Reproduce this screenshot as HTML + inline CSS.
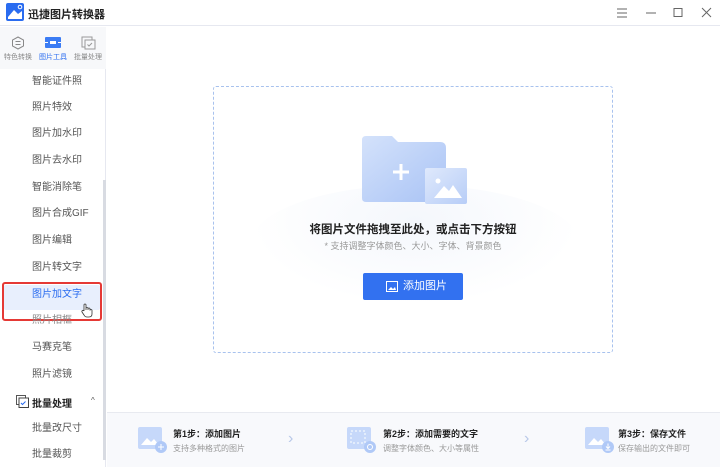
<!DOCTYPE html>
<html><head><meta charset="utf-8"><style>
*{margin:0;padding:0;box-sizing:border-box}
body{width:720px;height:467px;overflow:hidden;background:#fff;font-family:"Liberation Sans","Noto Sans CJK SC",sans-serif;position:relative;color:#333}
.abs{position:absolute}
.title{left:0;top:0;width:720px;height:26px;border-bottom:1px solid #e6e8f0;background:#fff}
.side{left:0;top:27px;width:106px;height:440px;border-right:1px solid #e6e8f0;background:#fff}
.tabs{left:0;top:27px;width:106px;height:42px;background:#f7f8fa}
.tab{position:absolute;top:36px;font-size:7px;color:#888;width:34px;text-align:center}
.item{position:absolute;left:32px;font-size:10px;color:#555;line-height:12px}
.btxt{font-size:9px;font-weight:bold;color:#222}
.bsub{font-size:8px;color:#999}
</style></head><body>
<div class="abs title"></div>
<svg class="abs" style="left:6px;top:3px" width="18" height="18" viewBox="0 0 18 18"><rect width="18" height="18" rx="2" fill="#2a6cf0"/><path d="M2 14 L8 7 L12 11 L16 8 L16 16 L2 16Z" fill="#fff"/><circle cx="14" cy="4" r="1.8" fill="none" stroke="#fff" stroke-width="1"/></svg>
<div class="abs" style="left:28px;top:6px;font-size:11px;font-weight:bold;color:#222">迅捷图片转换器</div>
<svg class="abs" style="left:615px;top:7px" width="100" height="12" viewBox="0 0 100 12"><g stroke="#666" stroke-width="1" fill="none"><path d="M2 2h10M2 6h10M2 10h10"/><path d="M31 6h10"/><rect x="59" y="1.5" width="8" height="8"/><path d="M87 1l9 9M96 1l-9 9"/></g></svg>
<div class="abs side"></div>
<div class="abs tabs"></div>
<svg class="abs" style="left:11px;top:36px" width="14" height="14" viewBox="0 0 14 14"><path d="M7 1 L12.5 4 V10 L7 13 L1.5 10 V4Z" fill="none" stroke="#888" stroke-width="1"/><path d="M4.5 5.5h5M4.5 8.5h5" stroke="#888" stroke-width="0.9"/></svg>
<svg class="abs" style="left:45px;top:37px" width="16" height="11" viewBox="0 0 16 11"><rect width="16" height="11" rx="1" fill="#3b7cf4"/><rect x="5" y="4" width="6" height="3" fill="#fff"/><path d="M0 5.5h3M13 5.5h3" stroke="#fff"/></svg>
<svg class="abs" style="left:81px;top:36px" width="15" height="14" viewBox="0 0 15 14"><rect x="1" y="1" width="10" height="10" fill="none" stroke="#999"/><rect x="4" y="4" width="10" height="9" fill="#f7f8fa" stroke="#999"/><path d="M6.5 8.5l1.5 1.5 3-3" stroke="#999" fill="none"/></svg>
<div class="tab" style="left:1px;top:52px">特色转换</div>
<div class="tab" style="left:36px;top:52px;color:#2a6cf0">图片工具</div>
<div class="tab" style="left:71px;top:52px">批量处理</div>
<div class="item" style="top:76px">智能证件照</div>
<div class="item" style="top:102px">照片特效</div>
<div class="item" style="top:128px">图片加水印</div>
<div class="item" style="top:155px">图片去水印</div>
<div class="item" style="top:182px">智能消除笔</div>
<div class="item" style="top:208px">图片合成GIF</div>
<div class="item" style="top:235px">图片编辑</div>
<div class="item" style="top:262px">图片转文字</div>
<div class="abs" style="left:4px;top:285px;width:96px;height:25px;background:#e8effd;border-radius:2px"></div>
<div class="abs" style="left:2px;top:282px;width:100px;height:39px;border:2px solid #e53935;border-radius:3px"></div>
<div class="item" style="top:289px;color:#2a6cf0">图片加文字</div>
<svg class="abs" style="left:81px;top:303px" width="12" height="15" viewBox="0 0 12 15"><path d="M3 8V2a1 1 0 0 1 2 0v5V5.5a1 1 0 0 1 2 0V7V6a1 1 0 0 1 2 0v1.5a1 1 0 0 1 2 0V11q0 3-3 3H6q-2 0-3-2L1 9a1 1 0 0 1 2-1z" fill="#fff" stroke="#333" stroke-width="0.8"/></svg>
<div class="item" style="top:315px;color:#888">照片相框</div>
<div class="item" style="top:342px">马赛克笔</div>
<div class="item" style="top:369px">照片滤镜</div>
<svg class="abs" style="left:16px;top:395px" width="13" height="13" viewBox="0 0 13 13"><rect x="0.5" y="0.5" width="9" height="9" fill="none" stroke="#555"/><rect x="3" y="3" width="9.5" height="9.5" fill="#fff" stroke="#444"/><path d="M5 8l1.5 1.5 3-3" stroke="#2a6cf0" fill="none"/></svg>
<div class="abs" style="left:32px;top:395px;font-size:10px;font-weight:bold;color:#222">批量处理</div>
<div class="abs" style="left:91px;top:396px;font-size:8px;color:#555">^</div>
<div class="item" style="top:423px">批量改尺寸</div>
<div class="item" style="top:449px">批量裁剪</div>
<div class="abs" style="left:103px;top:180px;width:3px;height:280px;background:#d8dbe2"></div>
<div class="abs" style="left:213px;top:86px;width:400px;height:267px;border:1px dashed #a8c2ee;border-radius:3px"></div>
<div class="abs" style="left:250px;top:185px;width:330px;height:120px;border-radius:50%;background:radial-gradient(ellipse at 50% 30%,#f4f7fc,#fff 70%)"></div>
<svg class="abs" style="left:362px;top:136px" width="106" height="72" viewBox="0 0 106 72">
<defs><linearGradient id="g" x1="0" y1="0" x2="1" y2="1"><stop offset="0" stop-color="#d4e2fb"/><stop offset="1" stop-color="#a9c3f5"/></linearGradient><linearGradient id="g2" x1="0" y1="0" x2="1" y2="1"><stop offset="0" stop-color="#dfe9fc"/><stop offset="1" stop-color="#b7cdf7"/></linearGradient></defs>
<path d="M4 0 H30 L36 6 H78 Q84 6 84 12 V62 Q84 66 80 66 H4 Q0 66 0 62 V4 Q0 0 4 0Z" fill="url(#g)"/>
<path d="M31 36h16M39 28v16" stroke="#fff" stroke-width="3"/>
<rect x="63" y="32" width="42" height="36" rx="2" fill="url(#g2)"/>
<circle cx="76" cy="45" r="2.5" fill="#fff"/>
<path d="M72 62 L82 50 L87 55 L91 49 L100 62Z" fill="#fff"/>
</svg>
<div class="abs" style="left:213px;width:400px;top:221px;text-align:center;font-size:11.5px;font-weight:bold;color:#222">将图片文件拖拽至此处，或点击下方按钮</div>
<div class="abs" style="left:213px;width:400px;top:239px;text-align:center;font-size:9px;color:#999">* 支持调整字体颜色、大小、字体、背景颜色</div>
<div class="abs" style="left:363px;top:273px;width:100px;height:27px;background:#3271f0;border-radius:2px;color:#fff;font-size:11px;line-height:27px;padding-left:40px">添加图片</div>
<svg class="abs" style="left:386px;top:281px" width="12" height="11" viewBox="0 0 12 11"><rect x="0.5" y="0.5" width="11" height="10" fill="none" stroke="#fff"/><path d="M2 9l3-3 2 2 2-2 1 3z" fill="#fff"/></svg>
<div class="abs" style="left:107px;top:412px;width:613px;height:55px;background:#f8f9fc;border-top:1px solid #e8eaf0"></div>
<svg class="abs" style="left:138px;top:427px" width="30" height="26" viewBox="0 0 30 26"><rect width="24" height="22" rx="2" fill="#c6d8fa"/><path d="M3 18 L9 11 L13 15 L16 12 L21 18Z" fill="#fff"/><circle cx="23" cy="20" r="6" fill="#b0c9f7"/><path d="M20 20h6M23 17v6" stroke="#fff"/></svg>
<div class="abs btxt" style="left:173px;top:427px">第1步：添加图片</div>
<div class="abs bsub" style="left:173px;top:443px">支持多种格式的图片</div>
<div class="abs" style="left:288px;top:430px;font-size:16px;color:#b8c8e8">›</div>
<svg class="abs" style="left:347px;top:427px" width="30" height="26" viewBox="0 0 30 26"><rect width="24" height="22" rx="2" fill="#c6d8fa"/><rect x="4" y="4" width="14" height="12" fill="none" stroke="#fff" stroke-dasharray="2 2"/><circle cx="23" cy="20" r="6" fill="#b0c9f7"/><circle cx="23" cy="20" r="2.5" fill="none" stroke="#fff"/></svg>
<div class="abs btxt" style="left:383px;top:427px">第2步：添加需要的文字</div>
<div class="abs bsub" style="left:383px;top:443px">调整字体颜色、大小等属性</div>
<div class="abs" style="left:524px;top:430px;font-size:16px;color:#b8c8e8">›</div>
<svg class="abs" style="left:585px;top:427px" width="30" height="26" viewBox="0 0 30 26"><rect width="24" height="22" rx="2" fill="#c6d8fa"/><path d="M3 18 L9 11 L13 15 L16 12 L21 18Z" fill="#fff"/><circle cx="23" cy="20" r="6" fill="#b0c9f7"/><path d="M23 16.5v5M21 19.5l2 2 2-2M20.5 23h5" stroke="#fff" fill="none"/></svg>
<div class="abs btxt" style="left:618px;top:427px">第3步：保存文件</div>
<div class="abs bsub" style="left:618px;top:443px">保存输出的文件即可</div>
</body></html>
